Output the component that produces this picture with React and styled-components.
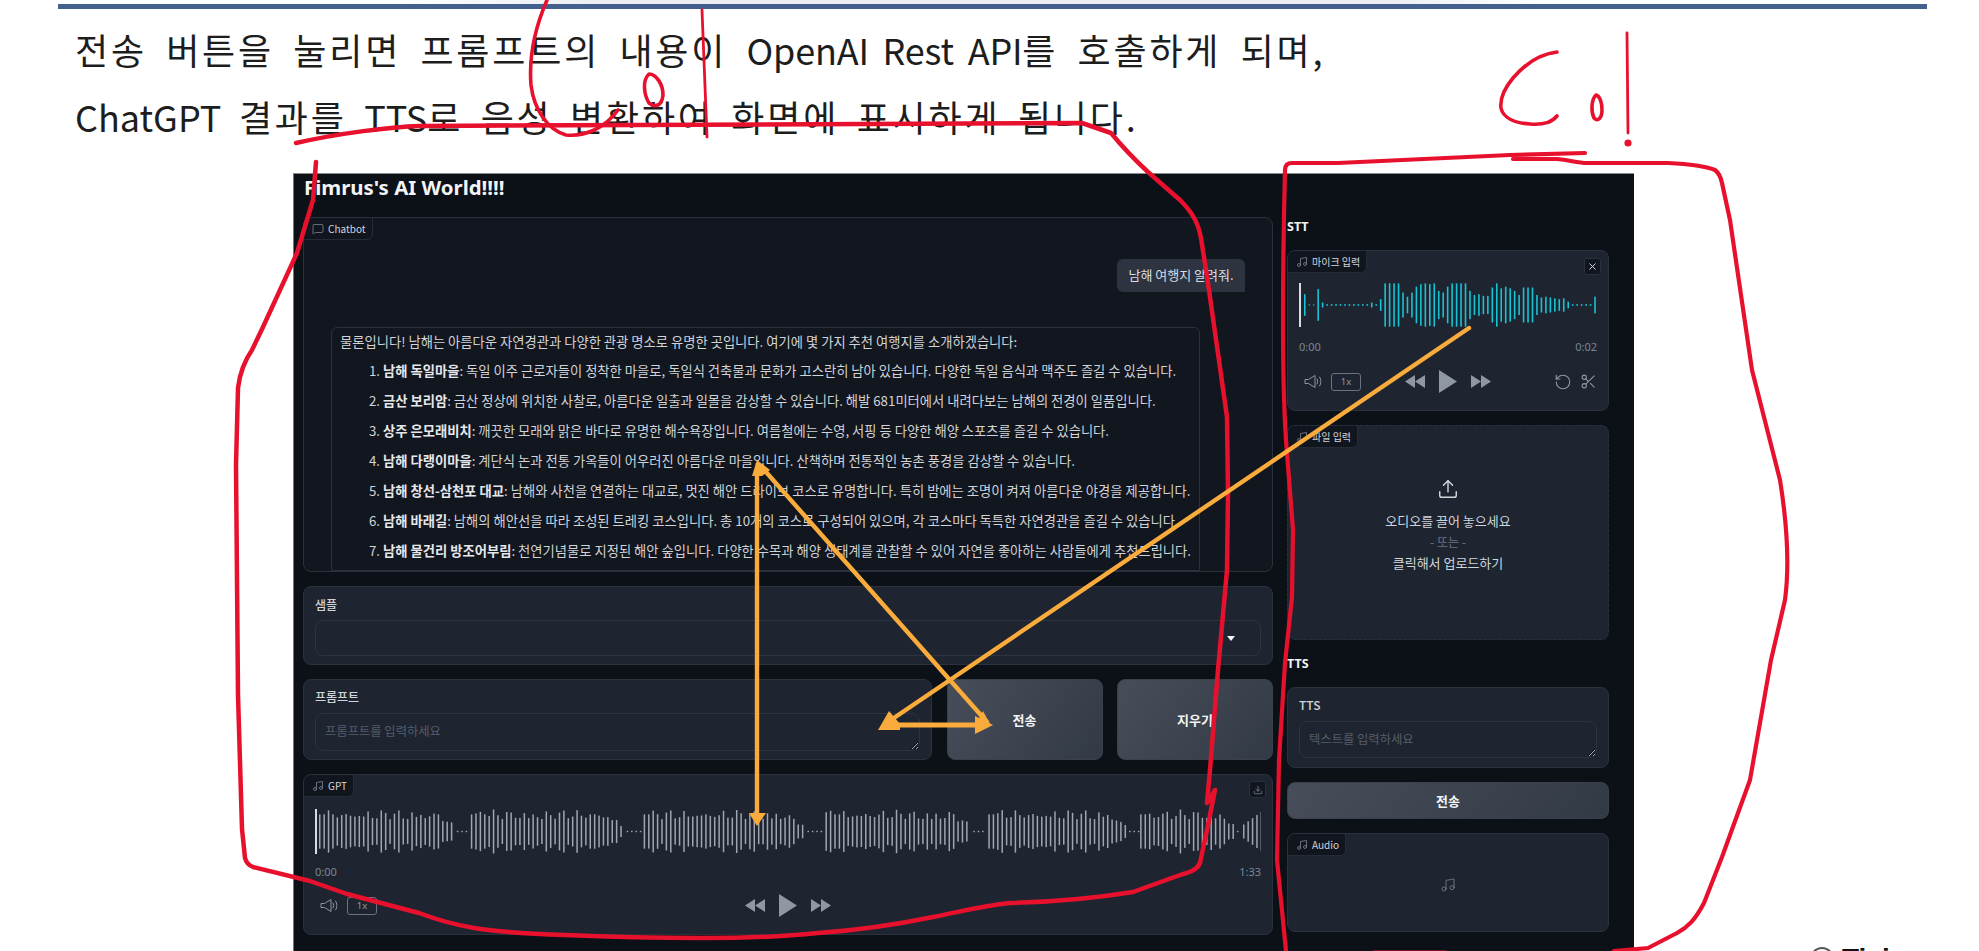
import styled, { createGlobalStyle } from "styled-components";
import {
  Download,
  MessageSquare,
  Music,
  RotateCcw,
  Scissors,
  Upload,
  X,
} from "lucide-react";

const KR = `"Noto Sans CJK KR", "Noto Sans", "Liberation Sans", sans-serif`;

const GlobalStyle = createGlobalStyle`
  html, body {
    margin: 0;
    background: #fff;
    overflow: hidden;
  }
  * {
    box-sizing: border-box;
  }
`;

const Slide = styled.div`
  position: relative;
  width: 1979px;
  height: 951px;
  overflow: hidden;
  font-family: ${KR};
`;

const TopShade = styled.div`
  height: 4px;
  background: linear-gradient(90deg, #fff 20%, #eceef0 30%, #eceef0 70%, #fff 78%);
`;

const TopBar = styled.div`
  width: 1869px;
  height: 5px;
  margin-left: 58px;
  background: #44608f;
`;

const Headline = styled.div`
  padding: 7px 0 23px 75px;
  font-size: 36px;
  line-height: 67px;
  color: #1d1d1d;
  white-space: nowrap;
`;

const HeadLine = styled.div`
  letter-spacing: ${(p) => p.$spacing}px;
  word-spacing: ${(p) => p.$words}px;
`;

const Latin = styled.span`
  letter-spacing: ${(p) => p.$spacing || 0}px;
  word-spacing: ${(p) => p.$words || 0}px;
`;

const Stage = styled.div`
  display: flex;
  align-items: flex-end;
`;

const Panel = styled.div`
  width: 1341px;
  height: 778px;
  margin-left: 293px;
  padding: 0 25px 0 10px;
  background: #0c1017;
  border-top: 1px solid #8a8a8a;
  border-left: 1px solid #777;
  flex-shrink: 0;
`;

const Title = styled.h1`
  height: 43px;
  margin: 0;
  padding-top: 1px;
  font-size: 20.4px;
  line-height: 24px;
  font-weight: 700;
  color: #f3f4f6;
  font-family: "Noto Sans", ${KR};
`;

const Columns = styled.div`
  display: grid;
  grid-template-columns: 970px 322px;
  column-gap: 14px;
  margin-left: -1px;
`;

const Column = styled.div`
  display: flex;
  flex-direction: column;
  gap: 14px;
`;

const Block = styled.div`
  position: relative;
  height: ${(p) => p.$h}px;
  background: ${(p) => p.$bg || "#1e2530"};
  border: 1px ${(p) => (p.$dashed ? "dashed" : "solid")} #2a313d;
  border-radius: 8px;
  overflow: hidden;
`;

const TabLabel = styled.div`
  position: absolute;
  top: -1px;
  left: -1px;
  height: 23px;
  display: flex;
  align-items: center;
  gap: 4px;
  padding: 0 6px 0 8px;
  font-size: 10px;
  color: #d1d5db;
  background: #11151e;
  border: 1px solid #262c37;
  border-radius: 0 0 6px 0;
  svg {
    color: #7d8591;
  }
`;

const ChatScroll = styled.div`
  height: 100%;
  padding: 41px 27px 0;
  overflow: hidden;
`;

const UserBubble = styled.div`
  width: 128px;
  height: 33px;
  margin-left: auto;
  line-height: 31px;
  text-align: center;
  font-size: 13px;
  color: #d9dce1;
  background: #2d343f;
  border-radius: 6px 6px 0 6px;
`;

const BotBubble = styled.div`
  width: 869px;
  margin-top: 35px;
  padding: 3px 8px 0 8px;
  font-size: 13.3px;
  line-height: 21px;
  color: #d0d3d8;
  border: 1px solid #2a313d;
  border-radius: 6px 6px 0 0;
  white-space: nowrap;
  p {
    margin: 0 0 7.6px;
  }
  ol {
    margin: 0;
    padding-left: 43px;
  }
  li {
    margin-bottom: 9px;
  }
  strong {
    font-weight: 700;
    color: #e5e7eb;
  }
`;

const FieldBlock = styled(Block)`
  padding: ${(p) => p.$top || 9}px 11px 0;
`;

const FieldLabel = styled.div`
  height: 17px;
  margin-bottom: ${(p) => p.$gap || 7}px;
  font-size: 12px;
  line-height: 17px;
  font-weight: 500;
  color: #d1d5db;
`;

const SelectBox = styled.div`
  height: 36px;
  display: flex;
  align-items: center;
  justify-content: flex-end;
  padding-right: 25px;
  border: 1px solid #2d3441;
  border-radius: 8px;
  &::after {
    content: "";
    border: 4px solid transparent;
    border-top: 5px solid #f3f4f6;
    border-bottom: 0;
  }
`;

const TextBox = styled.textarea`
  display: block;
  width: 100%;
  height: ${(p) => p.$h}px;
  padding: 8px 9px;
  font-family: ${KR};
  font-size: 12.3px;
  line-height: 18px;
  color: #d1d5db;
  background: #1e2530;
  border: 1px solid #2d3441;
  border-radius: 8px;
  outline: none;
  &::placeholder {
    color: #555d6a;
  }
`;

const PromptRow = styled.div`
  display: grid;
  grid-template-columns: 629px 156px 156px;
  column-gap: 14.5px;
  height: 81px;
`;

const ActionButton = styled.button`
  height: ${(p) => p.$h || 81}px;
  font-family: ${KR};
  font-size: 13px;
  font-weight: 700;
  color: #f3f4f6;
  background: linear-gradient(125deg, #474e59, #323a45);
  border: 1px solid #3a414c;
  border-radius: 8px;
`;

const AudioBody = styled.div`
  padding: ${(p) => p.$top}px 11px 0;
`;

const Wave = styled.svg`
  display: block;
  width: 100%;
  height: ${(p) => p.$h}px;
`;

const TimeRow = styled.div`
  display: flex;
  justify-content: space-between;
  margin-top: ${(p) => p.$gap}px;
  font-size: 11px;
  line-height: 16px;
  color: #7c8592;
  font-family: "Noto Sans", sans-serif;
`;

const ControlRow = styled.div`
  display: grid;
  grid-template-columns: 1fr auto 1fr;
  align-items: center;
  margin-top: ${(p) => p.$gap}px;
  color: #8f97a3;
`;

const ControlSide = styled.div`
  display: flex;
  align-items: center;
  justify-content: ${(p) => (p.$end ? "flex-end" : "flex-start")};
  gap: 8px;
  padding-left: ${(p) => (p.$end ? 0 : 5)}px;
`;

const ControlCenter = styled.div`
  display: flex;
  align-items: center;
  gap: 14px;
`;

const RateBadge = styled.div`
  width: 30px;
  height: 18px;
  font-size: 9.5px;
  line-height: 16px;
  text-align: center;
  color: #8f97a3;
  border: 1px solid #6b7280;
  border-radius: 3px;
  font-family: "Noto Sans", sans-serif;
`;

const IconButton = styled.div`
  position: absolute;
  top: ${(p) => p.$top}px;
  right: ${(p) => p.$right}px;
  width: 17px;
  height: 17px;
  display: flex;
  align-items: center;
  justify-content: center;
  color: ${(p) => p.$color || "#8f97a3"};
  background: #11151e;
  border: 1px solid #2a313d;
  border-radius: 3px;
`;

const ColumnHeading = styled.div`
  height: ${(p) => p.$h}px;
  font-size: 12.5px;
  line-height: 20px;
  font-weight: 700;
  color: #f3f4f6;
  font-family: "Noto Sans", sans-serif;
`;

const DropZone = styled.div`
  height: 100%;
  display: flex;
  flex-direction: column;
  align-items: center;
  padding-top: 52px;
  font-size: 13px;
  line-height: 21px;
  color: #d1d5db;
  svg {
    margin-bottom: 10px;
  }
`;

const DropHint = styled.div`
  color: #6f7783;
  font-size: 12px;
`;

const EmptyAudio = styled.div`
  height: 100%;
  display: flex;
  align-items: center;
  justify-content: center;
  padding-top: 5px;
  color: #737b87;
`;

const StampLine = styled.div`
  flex-shrink: 0;
  margin: 0 0 -24px 175px;
  display: flex;
  align-items: center;
  gap: 7px;
  font-family: "Liberation Sans", sans-serif;
  font-size: 28px;
  line-height: 32px;
  font-weight: 700;
  color: #111;
  white-space: nowrap;
`;

const InkLayer = styled.svg`
  position: absolute;
  top: 0;
  left: 0;
  width: 1979px;
  height: 951px;
  pointer-events: none;
`;

// 파형 막대 만들기, 구간별로 envelope 을 준다
function makeGptBars() {
  const segments = [
    [318, 452],
    [470, 622],
    [643, 803],
    [825, 969],
    [988, 1125],
    [1140, 1233],
    [1243, 1261],
  ];
  const bars = [];
  segments.forEach(([from, to], s) => {
    for (let x = from; x <= to; x += 4.4) {
      const t = (x - from) / (to - from);
      const fade = t > 0.88 ? 1 - (t - 0.88) * 5.5 : 1;
      const wobble = 0.56 + 0.44 * Math.abs(Math.sin(x * 2.37 + s) * Math.cos(x * 0.53));
      const h = s === 6 ? 14 + 26 * t : 44 * fade * Math.max(wobble, t < 0.1 ? 0.78 : 0);
      bars.push({ x: x - 314, h });
    }
    if (s < segments.length - 1) {
      for (let x = to + 4; x < segments[s + 1][0] - 2; x += 4.4) {
        bars.push({ x: x - 314, h: 1.4 });
      }
    }
  });
  return bars;
}

const gptBars = makeGptBars();

const sttHeights = [
  65, 3, 3, 95, 15, 5, 5, 5, 5, 5, 5, 5, 5, 5, 5, 15, 5, 35, 130, 130, 130, 130, 75, 50, 75, 110, 125,
  130, 125, 130, 85, 75, 110, 130, 130, 130, 130, 85, 60, 65, 55, 55, 105, 130, 100, 110, 100, 85, 60,
  105, 105, 105, 60, 45, 50, 45, 40, 35, 40, 20, 5, 5, 5, 5, 5, 50,
];
const sttBars = sttHeights.map((h, i) => ({ x: 5 + i * 4.48, h: h / 3 }));

function WaveForm({ bars, width, height, color, barWidth, headHeight }) {
  const mid = height / 2;
  return (
    <Wave $h={height} viewBox={`0 0 ${width} ${height}`} preserveAspectRatio="none">
      <rect x="0" y={mid - headHeight / 2} width="2" height={headHeight} fill="#d9dce1" />
      {bars.map((b, i) => (
        <rect key={i} x={b.x} y={mid - b.h / 2} width={barWidth} height={b.h} fill={color} />
      ))}
    </Wave>
  );
}

function Speaker() {
  return (
    <svg width="19" height="15" viewBox="0 0 19 15" fill="none" stroke="currentColor" strokeWidth="1">
      <path d="M1 5.5h3.5L11 1.5v12l-6.5-4H1z" strokeLinejoin="round" />
      <path d="M13 5c1 1.5 1 3.5 0 5M15.5 3c1.8 2.7 1.8 6.3 0 9" strokeLinecap="round" />
    </svg>
  );
}

function Skip({ back }) {
  return (
    <svg width="20" height="13" viewBox="0 0 20 13" fill="currentColor">
      {back ? <path d="M10 0v13L0 6.5zM20 0v13L10 6.5z" /> : <path d="M0 0v13l10-6.5zM10 0v13l10-6.5z" />}
    </svg>
  );
}

function PlayIcon() {
  return (
    <svg width="18" height="23" viewBox="0 0 18 23" fill="currentColor">
      <path d="M0 0l18 11.5L0 23z" />
    </svg>
  );
}

function PlayerControls({ gap, editable }) {
  return (
    <ControlRow $gap={gap}>
      <ControlSide>
        <Speaker />
        <RateBadge>1x</RateBadge>
      </ControlSide>
      <ControlCenter>
        <Skip back />
        <PlayIcon />
        <Skip />
      </ControlCenter>
      <ControlSide $end>
        {editable && (
          <>
            <RotateCcw size={18} strokeWidth={1.5} />
            <Scissors size={17} strokeWidth={1.5} />
          </>
        )}
      </ControlSide>
    </ControlRow>
  );
}

function AudioTab({ label }) {
  return (
    <TabLabel>
      <Music size={12} strokeWidth={1.6} />
      {label}
    </TabLabel>
  );
}

function Annotations() {
  return (
    <InkLayer viewBox="0 0 1979 951" fill="none" strokeLinecap="round" strokeLinejoin="round">
      {/* 빨간 펜 */}
      <g stroke="#e8112d" strokeWidth="3.6">
        <path
          strokeWidth="4.5"
          d="M296 143 C340 133 390 127 420 126 L1082 123 L1111 133 C1125 150 1135 160 1148 172 L1180 200 C1192 212 1198 222 1201 238 L1208 283 L1227 417 L1228 493 L1227 570 L1218 670 L1210 770 L1207 803 L1215 790 L1207 830 L1200 863 C1197 870 1190 872 1180 875 L1133 892 C1090 899 1050 902 1010 903 C980 906 960 912 933 917 C890 926 860 930 818 933 C780 937 740 938 703 938 C650 938 610 937 565 935 C530 934 500 932 474 928 C450 924 435 919 419 913 L347 894 L310 881 L253 867 C248 865 246 862 245 858 L242 829 L238 695 L236 465 L238 388 C240 372 245 360 252 350 L263 327 L297 253 L313 200 L316 162"
        />
        <path d="M547 0 C534 30 529 60 531 85 C534 110 548 130 566 135 C585 137 605 128 618 110" />
        <path d="M649 74 C642 80 644 95 649 103 C655 108 662 106 663 95 C663 84 656 74 649 74 Z" />
        <path d="M702 10 L707 137" strokeWidth="2.8" />
        <path d="M1557 52 C1540 54 1525 64 1513 78 C1503 90 1500 100 1501 108 C1503 118 1515 123 1530 124 C1545 125 1552 122 1557 116" />
        <path d="M1596 95 C1591 100 1591 112 1594 118 C1598 122 1602 118 1602 110 C1602 103 1600 96 1596 95 Z" />
        <path d="M1627 33 L1628 133" strokeWidth="2.8" />
        <circle cx="1628" cy="143" r="1.8" fill="#e8112d" />
        <path d="M1585 153 L1510 155 L1338 163 L1292 163 C1287 163 1285 166 1285 170 C1284 210 1283 260 1283 320 C1283 380 1284 410 1286 440 L1293 530 L1292 597 L1285 663 L1279 760 L1277 860 L1286 951" strokeWidth="4.2" />
        <path d="M1513 159 L1557 159 C1570 160 1577 163 1587 163 L1668 163 C1690 164 1705 166 1715 170 C1720 174 1721 178 1722 183 L1730 220 L1752 370 L1780 480 C1788 530 1789 570 1785 600 L1771 660 L1750 780 L1722 857 L1704 903 C1695 920 1688 927 1677 933 L1648 948 L1614 951" strokeWidth="4.2" />
        <path d="M1374 952 L1446 952" strokeWidth="3" />
      </g>
      {/* 노란 화살표 */}
      <g stroke="#f9ab3c" strokeWidth="4.4">
        <path d="M757 470 L757 815" />
        <path d="M766 472 L987 722" />
        <path d="M1469 328 L888 722" />
        <path d="M885 725 L985 725" strokeWidth="5" />
      </g>
      <g fill="#f9ab3c">
        <path d="M749 813 L766 813 L757 826 Z" />
        <path d="M752 476 L757 460 L770 470 L762 476 Z" />
        <path d="M878 730 L889 711 L900 724 L900 730 Z" />
        <path d="M975 716 L993 725 L975 734 Z" />
        <path d="M983 711 L990 724 L977 722 Z" />
      </g>
    </InkLayer>
  );
}

function App() {
  return (
    <Slide>
      <GlobalStyle />
      <TopShade />
      <TopBar />
      <Headline>
        <HeadLine $spacing={2.8} $words={8.5}>
          전송 버튼을 눌리면 프롬프트의 내용이{" "}
          <Latin $spacing={-0.2} $words={6}>
            OpenAI Rest API
          </Latin>
          를 호출하게 되며,
        </HeadLine>
        <HeadLine $spacing={2.8} $words={6.7}>
          <Latin>ChatGPT</Latin> 결과를 <Latin>TTS</Latin>로 음성 변환하여 화면에 표시하게 됩니다.
        </HeadLine>
      </Headline>
      <Stage>
        <Panel>
          <Title>Fimrus's AI World!!!!</Title>
          <Columns>
            <Column>
              <Block $h={355} $bg="#12161f">
                <TabLabel>
                  <MessageSquare size={12} strokeWidth={1.6} />
                  Chatbot
                </TabLabel>
                <ChatScroll>
                  <UserBubble>남해 여행지 알려줘.</UserBubble>
                  <BotBubble>
                    <p>
                      물론입니다! 남해는 아름다운 자연경관과 다양한 관광 명소로 유명한 곳입니다. 여기에 몇 가지 추천
                      여행지를 소개하겠습니다:
                    </p>
                    <ol>
                      <li>
                        <strong>남해 독일마을</strong>: 독일 이주 근로자들이 정착한 마을로, 독일식 건축물과 문화가
                        고스란히 남아 있습니다. 다양한 독일 음식과 맥주도 즐길 수 있습니다.
                      </li>
                      <li>
                        <strong>금산 보리암</strong>: 금산 정상에 위치한 사찰로, 아름다운 일출과 일몰을 감상할 수
                        있습니다. 해발 681미터에서 내려다보는 남해의 전경이 일품입니다.
                      </li>
                      <li>
                        <strong>상주 은모래비치</strong>: 깨끗한 모래와 맑은 바다로 유명한 해수욕장입니다. 여름철에는
                        수영, 서핑 등 다양한 해양 스포츠를 즐길 수 있습니다.
                      </li>
                      <li>
                        <strong>남해 다랭이마을</strong>: 계단식 논과 전통 가옥들이 어우러진 아름다운 마을입니다.
                        산책하며 전통적인 농촌 풍경을 감상할 수 있습니다.
                      </li>
                      <li>
                        <strong>남해 창선-삼천포 대교</strong>: 남해와 사천을 연결하는 대교로, 멋진 해안 드라이브
                        코스로 유명합니다. 특히 밤에는 조명이 켜져 아름다운 야경을 제공합니다.
                      </li>
                      <li>
                        <strong>남해 바래길</strong>: 남해의 해안선을 따라 조성된 트레킹 코스입니다. 총 10개의 코스로
                        구성되어 있으며, 각 코스마다 독특한 자연경관을 즐길 수 있습니다.
                      </li>
                      <li>
                        <strong>남해 물건리 방조어부림</strong>: 천연기념물로 지정된 해안 숲입니다. 다양한 수목과 해양
                        생태계를 관찰할 수 있어 자연을 좋아하는 사람들에게 추천드립니다.
                      </li>
                    </ol>
                  </BotBubble>
                </ChatScroll>
              </Block>

              <FieldBlock $h={79}>
                <FieldLabel>샘플</FieldLabel>
                <SelectBox />
              </FieldBlock>

              <PromptRow>
                <FieldBlock $h={81} $top={8}>
                  <FieldLabel $gap={8}>프롬프트</FieldLabel>
                  <TextBox $h={38} placeholder="프롬프트를 입력하세요" />
                </FieldBlock>
                <ActionButton>전송</ActionButton>
                <ActionButton>지우기</ActionButton>
              </PromptRow>

              <Block $h={161}>
                <AudioTab label="GPT" />
                <IconButton $top={6} $right={6}>
                  <Download size={10} strokeWidth={1.6} />
                </IconButton>
                <AudioBody $top={34}>
                  <WaveForm
                    bars={gptBars}
                    width={947}
                    height={45}
                    color="#a0a6b0"
                    barWidth={1.5}
                    headHeight={45}
                  />
                  <TimeRow $gap={10}>
                    <span>0:00</span>
                    <span>1:33</span>
                  </TimeRow>
                  <PlayerControls gap={14} />
                </AudioBody>
              </Block>
            </Column>

            <Column>
              <ColumnHeading $h={19}>STT</ColumnHeading>
              <Block $h={161}>
                <AudioTab label="마이크 입력" />
                <IconButton $top={7} $right={7} $color="#e5e7eb">
                  <X size={11} strokeWidth={2} />
                </IconButton>
                <AudioBody $top={32}>
                  <WaveForm
                    bars={sttBars}
                    width={299}
                    height={44}
                    color="#17c3d4"
                    barWidth={1.6}
                    headHeight={44}
                  />
                  <TimeRow $gap={12}>
                    <span>0:00</span>
                    <span>0:02</span>
                  </TimeRow>
                  <PlayerControls gap={15} editable />
                </AudioBody>
              </Block>

              <Block $h={215} $dashed>
                <AudioTab label="파일 입력" />
                <DropZone>
                  <Upload size={22} strokeWidth={1.6} />
                  <div>오디오를 끌어 놓으세요</div>
                  <DropHint>- 또는 -</DropHint>
                  <div>클릭해서 업로드하기</div>
                </DropZone>
              </Block>

              <ColumnHeading $h={19}>TTS</ColumnHeading>

              <FieldBlock $h={81} $top={8}>
                <FieldLabel $gap={8}>TTS</FieldLabel>
                <TextBox $h={37} placeholder="텍스트를 입력하세요" />
              </FieldBlock>

              <ActionButton $h={37}>전송</ActionButton>

              <Block $h={99}>
                <AudioTab label="Audio" />
                <EmptyAudio>
                  <Music size={16} strokeWidth={1.3} />
                </EmptyAudio>
              </Block>
            </Column>
          </Columns>
        </Panel>
        <StampLine>
          <svg width="26" height="26" viewBox="0 0 26 26" fill="none" stroke="#555" strokeWidth="2">
            <circle cx="13" cy="13" r="11" />
          </svg>
          Tixi
        </StampLine>
      </Stage>
      <Annotations />
    </Slide>
  );
}

export default App;
